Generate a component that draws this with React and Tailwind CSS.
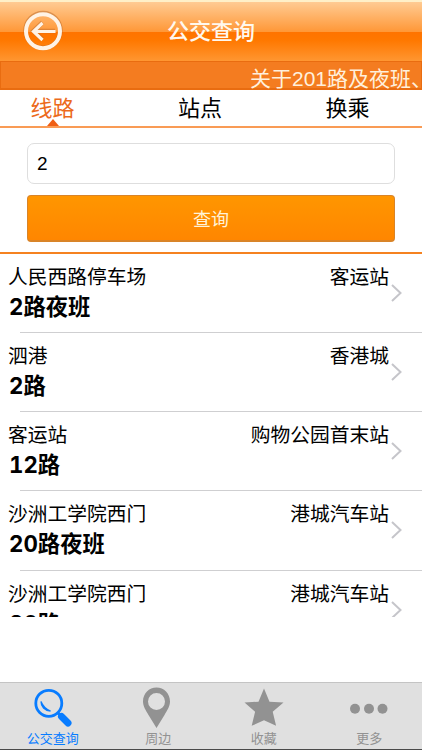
const tabs = ['线路', '站点', '换乘'];

const routes = [
  { from: '人民西路停车场', to: '客运站', name: '2路夜班' },
  { from: '泗港', to: '香港城', name: '2路' },
  { from: '客运站', to: '购物公园首末站', name: '12路' },
  { from: '沙洲工学院西门', to: '港城汽车站', name: '20路夜班' },
  { from: '沙洲工学院西门', to: '港城汽车站', name: '20路' },
];

function BackIcon() {
  return (
    <svg className="-mt-1" width="40" height="44" viewBox="0 0 40 44" fill="none">
      <circle cx="20" cy="22.500" r="17.400" stroke="#b9692c" strokeOpacity=".5" strokeWidth="4.600" />
      <circle cx="20" cy="23.200" r="17" stroke="#fff3e6" strokeWidth="4" />
      <path d="M32 23H10M19.500 14.500L10.500 23l9 8.700" stroke="#b9692c" strokeOpacity=".45" strokeWidth="4.600" />
      <path d="M32.500 23.500H10.500M19.500 15L10.500 23.500l9 8.500" stroke="#fff3e6" strokeWidth="3.200" />
    </svg>
  );
}

function Header() {
  return (
    <header className="flex h-[61px] shrink-0 items-center border-t-2 border-[#fff0c8] bg-[linear-gradient(#ffcb93_0%,#ff9838_50%,#ff7300_51%,#ff7800_65%,#ff9631_100%)]">
      <div className="flex w-[83px] justify-end pr-5">
        <BackIcon />
      </div>
      <h1 className="flex-1 pl-[84px] text-[22px] leading-[30px] font-medium text-[#fff8ee]">公交查询</h1>
    </header>
  );
}

function Notice() {
  return (
    <div className="flex h-[29px] shrink-0 border border-b-2 border-[#e96c10] bg-[#f47c20] pl-[249px]">
      <p className="mt-[3px] text-[21px] leading-[28px] whitespace-nowrap text-[#fff0dc]">关于201路及夜班、</p>
    </div>
  );
}

function Tabs() {
  return (
    <nav className="grid h-[38px] shrink-0 grid-cols-[105px_190px_105px] border-b-2 border-[#f99b55] bg-white text-center text-[22px] leading-[38px]">
      {tabs.map((tab, i) => (
        <div key={tab} className={i === 0 ? 'relative h-9 text-[#ec6a1b]' : 'h-9 text-black'}>
          {tab}
          {i === 0 && (
            <svg className="absolute bottom-0 left-[47px]" width="12" height="7" viewBox="0 0 12 7">
              <path d="M6 0l6 7H0z" fill="#f05f14" />
            </svg>
          )}
        </div>
      ))}
    </nav>
  );
}

function SearchForm() {
  return (
    <div className="flex h-[126px] shrink-0 flex-col border-b-2 border-[#f58220] px-[27px] pt-[15px]">
      <div className="h-[41px] rounded-[7px] border border-[#dedede] pl-[9px] font-['Liberation_Sans'] text-[19px] leading-[39px]">
        2
      </div>
      <button className="mt-[11px] h-[47px] rounded border border-b-2 border-[#d98428] bg-linear-to-b from-[#ff9600] to-[#ff8600] pt-[3px] text-[18px] leading-[42px] text-[#fff3d8]">
        查询
      </button>
    </div>
  );
}

function RouteRow({ route }) {
  return (
    <li className="h-[79.125px] shrink-0">
      <div className="flex h-full flex-col pt-2">
        <div className="flex h-[30px] justify-between pr-[33px] pl-2 text-[19.750px] leading-[30px]">
          <span>{route.from}</span>
          <span>{route.to}</span>
        </div>
        <div className="flex h-8 justify-between pr-[20px] pl-[9px]">
          <span className="-mt-px font-[Inter,'Noto_Sans_CJK_SC',sans-serif] text-[22.300px] leading-8 font-bold tabular-nums">
            {route.name}
          </span>
          <svg className="-mt-[8px]" width="11" height="18" viewBox="0 0 11 18" fill="none">
            <path d="M1 1l8.500 8L1 17" stroke="#c5c5ca" strokeWidth="2" />
          </svg>
        </div>
        <div className="mt-auto ml-5 border-b border-[#cfcfd1]" />
      </div>
    </li>
  );
}

function TabItem({ label, active, children }) {
  return (
    <div className={`flex flex-col items-center ${active ? 'text-[#087cff]' : 'text-[#929292]'}`}>
      <svg className="mt-[3px] shrink-0" width="42" height="44" viewBox="0 0 42 44" fill="none">
        {children}
      </svg>
      <span className="text-[13px] leading-[18px]">{label}</span>
    </div>
  );
}

function BottomBar() {
  return (
    <footer className="grid h-[68px] shrink-0 grid-cols-4 border-t border-b border-t-[#c4c4c4] border-b-[#4a4a4a] bg-[#e0e0e0]">
      <TabItem label="公交查询" active>
        <circle cx="16.800" cy="17.300" r="13" stroke="currentColor" strokeWidth="2.800" />
        <path d="M9 15.500c0 5 3.500 9 9.500 9.500-4-1.500-7.500-4.500-9.500-9.500z" stroke="currentColor" strokeWidth="1.300" fill="currentColor" />
        <path d="M25.500 26.500l4 4" stroke="currentColor" strokeWidth="3" />
        <path d="M29.500 30.500l6.500 6.500" stroke="currentColor" strokeWidth="7" strokeLinecap="round" />
      </TabItem>
      <TabItem label="周边">
        <path
          d="M19.500 1.500C12 1.500 6 7.500 6 15.500c0 5 3 9 5.500 13.500L19.500 42l8-13C30 24.500 33 20.500 33 15.500 33 7.500 27 1.500 19.500 1.500zm0 5.500a8.500 8.500 0 1 1 0 17 8.500 8.500 0 0 1 0-17z"
          fill="currentColor"
          fillRule="evenodd"
        />
      </TabItem>
      <TabItem label="收藏">
        <path d="M21 2.500l5.500 13.200 14 .8-10.800 9.300 3.400 14L21 34.300 8.700 39.800l3.400-14L1.500 16.500l14-.8z" fill="currentColor" />
      </TabItem>
      <TabItem label="更多">
        <circle cx="7" cy="22.800" r="5" fill="currentColor" />
        <circle cx="21" cy="22.800" r="5" fill="currentColor" />
        <circle cx="34.500" cy="22.800" r="5" fill="currentColor" />
      </TabItem>
    </footer>
  );
}

function App() {
  return (
    <div className="flex h-[750px] w-[422px] flex-col overflow-hidden bg-white font-['Liberation_Sans','Noto_Sans_CJK_SC',sans-serif] text-black">
      <Header />
      <Notice />
      <Tabs />
      <SearchForm />
      <ul className="flex h-[363px] shrink-0 flex-col overflow-hidden">
        {routes.map((route, i) => (
          <RouteRow key={i} route={route} />
        ))}
      </ul>
      <div className="flex-1" />
      <BottomBar />
    </div>
  );
}

export default App;
